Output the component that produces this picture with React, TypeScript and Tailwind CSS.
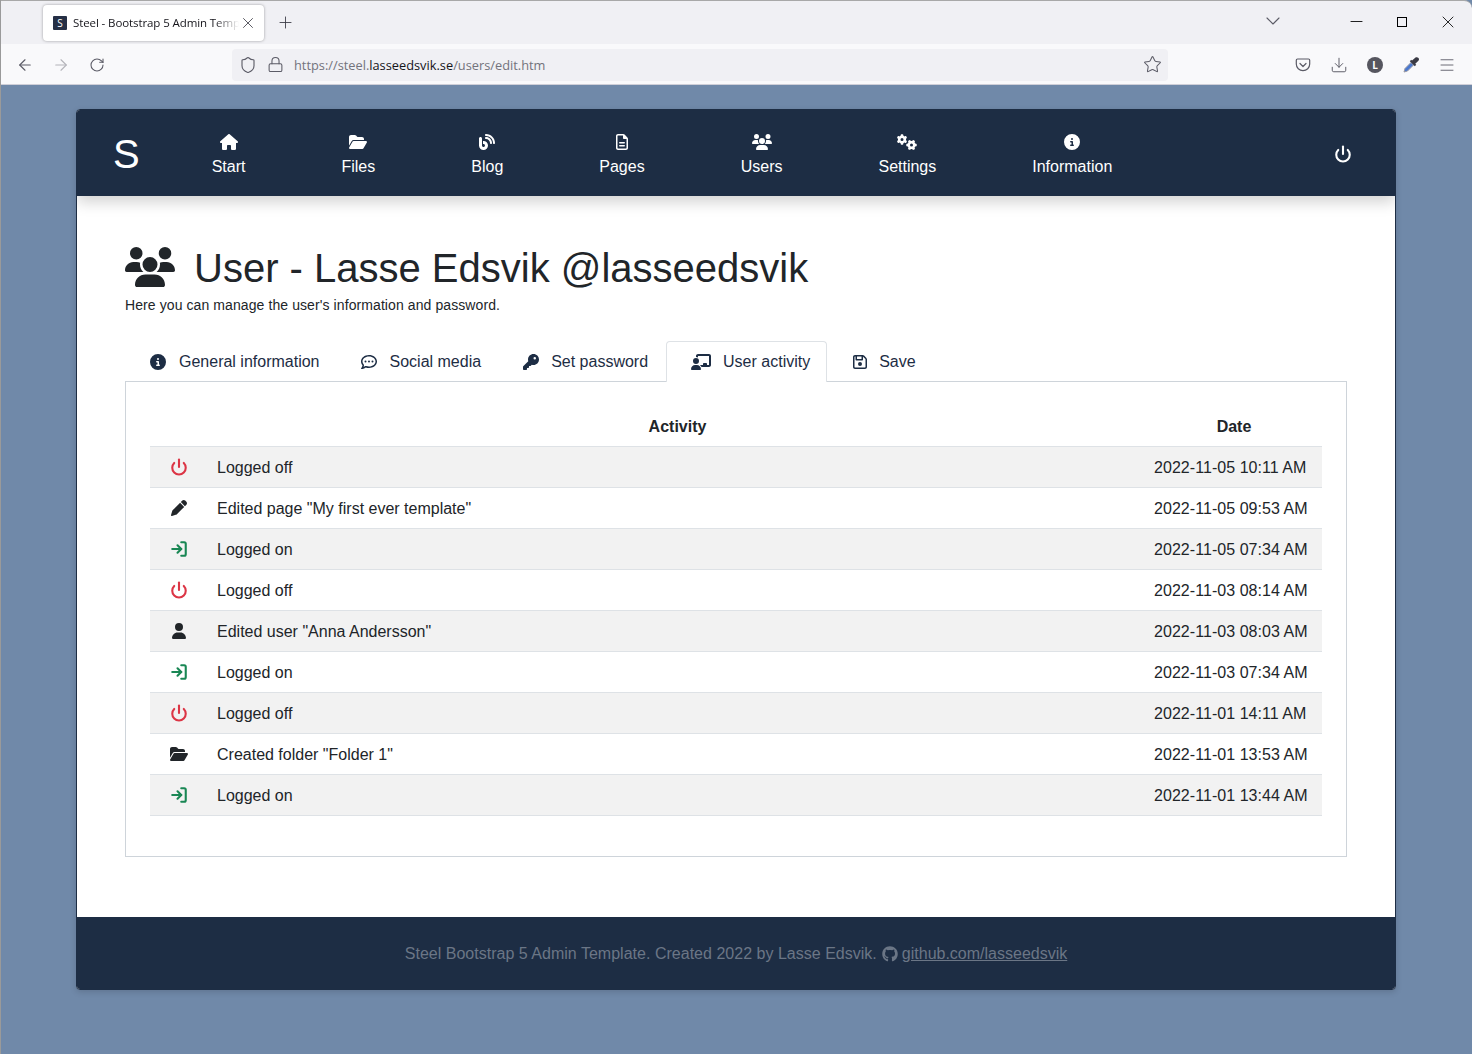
import React from "react";
import { FaHouse, FaFolderOpen, FaBlog, FaRegFileLines, FaUsers, FaGears, FaCircleInfo, FaRegCommentDots, FaKey, FaChalkboardUser, FaRegFloppyDisk, FaPen, FaUser, FaGithub } from "react-icons/fa6";
import { FiPower, FiLogIn } from "react-icons/fi";
import { ArrowLeft, ArrowRight, RotateCw, Shield, Lock, Star, Download, Menu, ChevronDown, Minus, X, Plus } from "lucide-react";

const navItems = [
  { label: "Start", Icon: FaHouse, cls: "h-[16px] w-[18px]" },
  { label: "Files", Icon: FaFolderOpen, cls: "h-[16px] w-[18px]" },
  { label: "Blog", Icon: FaBlog, cls: "h-[16px] w-[16px]" },
  { label: "Pages", Icon: FaRegFileLines, cls: "h-[16px] w-[16px]" },
  { label: "Users", Icon: FaUsers, cls: "h-[16px] w-[20px]" },
  { label: "Settings", Icon: FaGears, cls: "h-[16px] w-[20px]" },
  { label: "Information", Icon: FaCircleInfo, cls: "h-[16px] w-[16px]" },
];

const tabs = [
  { label: "General information", Icon: FaCircleInfo, size: 16, box: "flex items-center gap-[13px] border border-transparent pl-[24px] pr-[15px] pt-[1px] text-[16px] text-[#1d2d44]" },
  { label: "Social media", Icon: FaRegCommentDots, size: 16, box: "flex items-center gap-[13px] border border-transparent pl-[24px] pr-[16px] pt-[1px] text-[16px] text-[#1d2d44]" },
  { label: "Set password", Icon: FaKey, size: 16, box: "flex items-center gap-[12px] border border-transparent pl-[24px] pr-[17px] pt-[1px] text-[16px] text-[#1d2d44]" },
  { label: "User activity", Icon: FaChalkboardUser, size: 20, box: "relative z-10 -mb-px flex items-center gap-[12px] rounded-t border border-b-0 border-[#dee2e6] bg-white pl-[24px] pr-[16px] text-[16px] text-[#1d2d44]" },
  { label: "Save", Icon: FaRegFloppyDisk, size: 16, box: "flex items-center gap-[11px] border border-transparent pl-[24px] pr-[16px] pt-[1px] text-[16px] text-[#1d2d44]" },
];

function OffIcon() {
  return <FiPower className="mx-auto text-[#dc3545]" size={18} strokeWidth={2.8} />;
}
function OnIcon() {
  return <FiLogIn className="mx-auto text-[#198754]" size={18} strokeWidth={2.8} />;
}

const rows: { icon: React.ReactNode; text: string; date: string }[] = [
  { icon: <OffIcon />, text: "Logged off", date: "2022-11-05 10:11 AM" },
  { icon: <FaPen className="mx-auto" size={16} />, text: 'Edited page "My first ever template"', date: "2022-11-05 09:53 AM" },
  { icon: <OnIcon />, text: "Logged on", date: "2022-11-05 07:34 AM" },
  { icon: <OffIcon />, text: "Logged off", date: "2022-11-03 08:14 AM" },
  { icon: <FaUser className="mx-auto" size={16} />, text: 'Edited user "Anna Andersson"', date: "2022-11-03 08:03 AM" },
  { icon: <OnIcon />, text: "Logged on", date: "2022-11-03 07:34 AM" },
  { icon: <OffIcon />, text: "Logged off", date: "2022-11-01 14:11 AM" },
  { icon: <FaFolderOpen className="mx-auto" size={18} />, text: 'Created folder "Folder 1"', date: "2022-11-01 13:53 AM" },
  { icon: <OnIcon />, text: "Logged on", date: "2022-11-01 13:44 AM" },
];

function Pocket() {
  return (
    <svg width="16" height="16" viewBox="0 0 16 16" fill="none" stroke="#5b5b66" strokeWidth="1.2">
      <path d="M2.500 2h11c.8 0 1.200.5 1.200 1.200V7c0 3.800-3 6.600-6.700 6.600S1.300 10.800 1.300 7V3.200C1.300 2.500 1.700 2 2.500 2z" />
      <path d="M5 6.500l3 3 3-3" strokeLinecap="round" strokeLinejoin="round" />
    </svg>
  );
}

function Dropper() {
  return (
    <svg width="18" height="18" viewBox="0 0 18 18">
      <path d="M2 16l1-3.500 6-6 2.500 2.500-6 6z" fill="#4a78d0" stroke="#9a9aa4" strokeWidth="1" />
      <path d="M9.500 5l4-3.500c1-.7 2.200-.3 3 .6.800 1 .6 2.100-.3 3L12.500 8.500z" fill="#3a3a44" />
      <path d="M8.500 4.500l5 5" stroke="#3a3a44" strokeWidth="2" />
    </svg>
  );
}

export default function App() {
  return (
    <div className="min-h-screen bg-[#7089a9] border-l border-[#9a9a9a] font-['Liberation_Sans',sans-serif] text-[#212529]">
      {/* Browser window */}
      <div className="rounded-tr-lg border-t border-[#a8a8a8] bg-[#f0f0f4]">
        <div className="flex h-[43px] items-start font-['Open_Sans',sans-serif]">
          <div className="ml-[42px] mt-[4px] flex h-[36px] w-[221px] items-center rounded bg-white pl-[10px] pr-[7px] shadow-[0_0_3px_rgba(0,0,0,0.35)]">
            <span className="flex h-[14px] w-[14px] shrink-0 items-center justify-center rounded-[1px] bg-[#252f45] text-[10px] leading-none text-white">S</span>
            <span className="ml-[6px] w-[166px] overflow-hidden whitespace-nowrap text-[11.5px] tracking-[-0.1px] text-[#15141a] [mask-image:linear-gradient(to_right,black_85%,transparent)]">Steel - Bootstrap 5 Admin Template</span>
            <X className="shrink-0 text-[#3a3a44]" size={18} strokeWidth={1.1} />
          </div>
          <Plus className="ml-[11.5px] mt-[11.5px] text-[#3a3a44]" size={19} strokeWidth={1.1} />
          <div className="flex-1" />
          <ChevronDown className="mr-[61.5px] mt-[8px] text-[#5b5b66]" size={24} strokeWidth={1.1} />
          <Minus className="mr-[31.5px] mt-[10.500px] text-black" size={19} strokeWidth={1.1} />
          <div className="mr-[31px] mt-[16px] h-[10px] w-[10px] border border-black" />
          <X className="mr-[14px] mt-[11px] text-black" size={20} strokeWidth={1} />
        </div>
        <div className="flex h-[41px] items-center border-b border-[#cfcfd8] bg-[#f9f9fb] pt-[1px] font-['Open_Sans',sans-serif]">
          <ArrowLeft className="ml-[15px] text-[#5b5b66]" size={18} strokeWidth={1.5} />
          <ArrowRight className="ml-[18px] text-[#b4b4ba]" size={18} strokeWidth={1.5} />
          <RotateCw className="ml-[19px] text-[#5b5b66]" size={16} strokeWidth={1.6} />
          <div className="ml-[127px] flex h-[32px] w-[936px] items-center rounded bg-[#f0f0f4] pl-[7px] pr-[6px]">
            <Shield className="text-[#5b5b66]" size={18} strokeWidth={1.5} />
            <Lock className="ml-[10px] text-[#5b5b66]" size={17} strokeWidth={1.5} />
            <span className="ml-[10px] mt-[2px] text-[12.800px] text-[#73737c]">
              https://steel.<span className="text-[#15141a]">lasseedsvik.se</span>/users/edit.htm
            </span>
            <div className="flex-1" />
            <Star className="text-[#5b5b66]" size={19} strokeWidth={1.3} />
          </div>
          <div className="flex-1" />
          <div className="flex items-center pr-[7px]">
            <span className="flex w-[36px] justify-center"><Pocket /></span>
            <span className="flex w-[36px] justify-center"><Download className="text-[#5b5b66]" size={18} strokeWidth={1.3} /></span>
            <span className="flex w-[36px] justify-center"><span className="flex h-[16px] w-[16px] items-center justify-center rounded-full bg-[#56565f] text-[10px] font-bold leading-none text-white">L</span></span>
            <span className="flex w-[36px] justify-center"><Dropper /></span>
            <span className="flex w-[36px] justify-center"><Menu className="text-[#5b5b66]" size={18} strokeWidth={1.2} /></span>
          </div>
        </div>
      </div>

      {/* Page */}
      <div className="ml-[75px] mt-[24px] w-[1320px] overflow-hidden rounded border border-[#1d2d44] bg-white shadow-[0_2px_6px_rgba(0,0,0,0.15)]">
        <header className="relative flex h-[86px] items-start bg-[#1d2d44] text-white shadow-[0_6px_14px_rgba(0,0,0,0.18)]">
          <div className="ml-[36px] mt-[20px] text-[40px] leading-[48px]">S</div>
          <nav className="ml-[24px] flex">
            {navItems.map(({ label, Icon, cls }) => (
              <div key={label} className="flex flex-col items-center px-[48px] pt-[24px]">
                <Icon className={cls} />
                <span className="mt-[5px] text-[16px] leading-[24px]">{label}</span>
              </div>
            ))}
          </nav>
          <div className="flex-1" />
          <FiPower className="mr-[43px] mt-[35px]" size={18} strokeWidth={2.8} />
        </header>

        <main className="px-[48px] pb-[60px] pt-[48px]">
          <h1 className="flex items-center text-[40px] font-normal leading-[48px]">
            <FaUsers className="-mt-[2px] mr-[19px] h-[40px] w-[50px]" />
            User - Lasse Edsvik @lasseedsvik
          </h1>
          <p className="mt-[3px] text-[14px] leading-[21px] tracking-[0.09px]">Here you can manage the user's information and password.</p>

          <div className="mt-[25px] flex h-[40px] items-stretch">
            {tabs.map(({ label, Icon, size, box }) => (
              <div key={label} className={box}>
                <Icon className="shrink-0" size={size} />
                <span>{label}</span>
              </div>
            ))}
          </div>

          <div className="border border-[#ced4da] px-[24px] pb-[40px] pt-[23px]">
            <table className="w-full table-fixed border-collapse text-[16px]">
              <colgroup>
                <col className="w-[59px]" />
                <col />
                <col className="w-[176px]" />
              </colgroup>
              <thead>
                <tr className="h-[41px] border-b border-[#dee2e6]">
                  <th />
                  <th className="px-2 pt-[3px] text-center font-bold">Activity</th>
                  <th className="px-2 pt-[3px] text-center font-bold">Date</th>
                </tr>
              </thead>
              <tbody>
                {rows.map((r, i) => (
                  <tr key={i} className={i % 2 === 0 ? "h-[41px] border-b border-[#dee2e6] bg-[#f2f2f2]" : "h-[41px] border-b border-[#dee2e6]"}>
                    <td className="pl-[7px] pr-[9px] text-center align-middle">{r.icon}</td>
                    <td className="px-2 pt-[2px] align-middle">{r.text}</td>
                    <td className="whitespace-nowrap px-2 pt-[2px] align-middle tracking-[0.05px]">{r.date}</td>
                  </tr>
                ))}
              </tbody>
            </table>
          </div>
        </main>

        <footer className="flex h-[72px] items-center justify-center bg-[#1d2d44] pt-[2px] text-[16px] text-[#6b7686]">
          <span className="tracking-[0.016px]">Steel Bootstrap 5 Admin Template. Created 2022 by Lasse Edsvik.</span>
          <FaGithub className="ml-[5px] mr-[4px]" size={16} />
          <span className="underline">github.com/lasseedsvik</span>
        </footer>
      </div>
    </div>
  );
}
